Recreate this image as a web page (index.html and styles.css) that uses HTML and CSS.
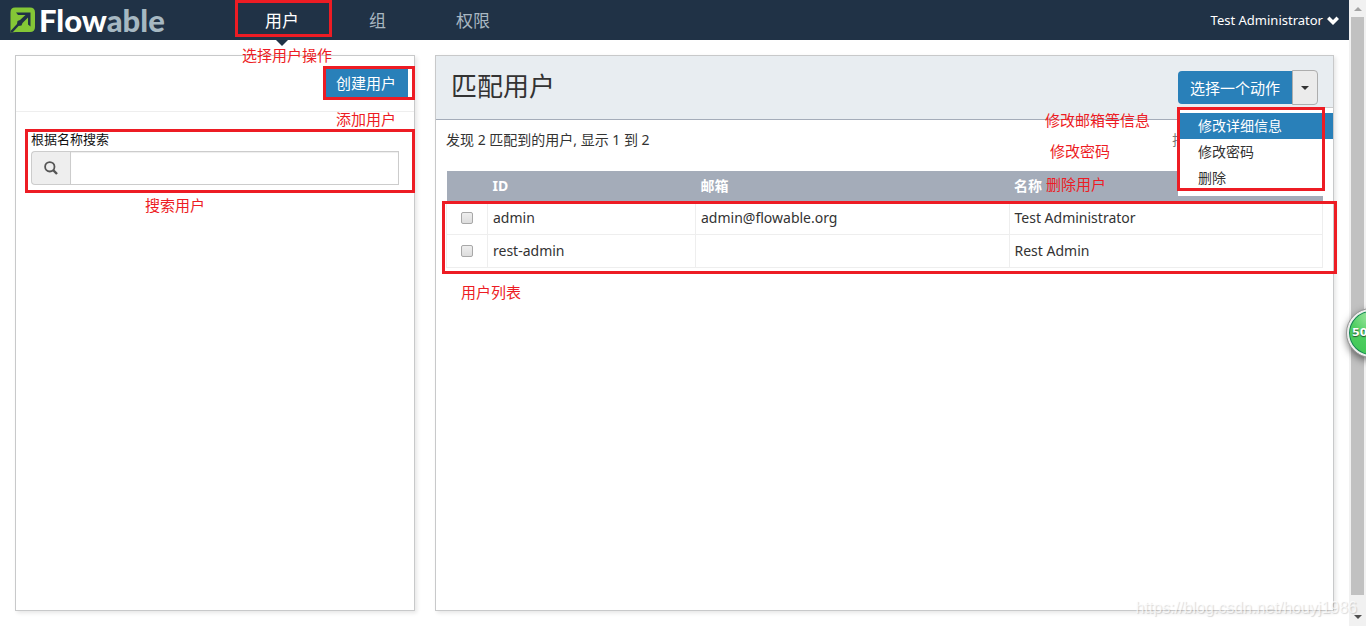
FILE: index.html
```html
<!DOCTYPE html>
<html lang="zh-CN">
<head>
<meta charset="utf-8">
<title>Flowable</title>
<link rel="stylesheet" href="styles.css">
</head>
<body>
<div class="page">
  <header class="topbar">
    <a class="brand" href="#" aria-label="Flowable">
      <svg class="brand-mark" viewBox="0 0 26 26" aria-hidden="true">
        <path d="M5 0.500H20Q25 0.500 25 5.500V20Q25 25 20 25H6L0.500 25.500V5.500Q0.500 0.500 5 0.500Z" fill="#84c736"/>
        <path d="M6 5.500H20.500V19.500L18 17.500V10.500L12.500 16L11.500 18.500L8.500 19L2.500 25.500H0.500V24L7 17L7.500 14L10 13L15.500 8H8Z" fill="#203246"/>
      </svg>
      <span class="brand-name">Flow<span class="brand-tail">able</span></span>
    </a>
    <nav class="nav">
      <a class="nav-link active" href="#">用户<span class="mark-box box-nav"></span></a>
      <a class="nav-link" href="#">组</a>
      <a class="nav-link" href="#">权限</a>
    </nav>
    <button class="account" type="button">Test Administrator
      <svg class="account-icon" viewBox="0 0 12 9" aria-hidden="true"><path d="M2.500 0.500L6 4L9.500 0.500L12 3L6 9L0 3Z" fill="#fff"/></svg>
    </button>
  </header>

  <main class="content">
    <section class="panel sidebar">
      <span class="note note-nav">选择用户操作</span>
      <div class="sidebar-head">
        <button class="btn-create" type="button">创建用户<span class="mark-box box-create"></span></button>
        <span class="note note-create">添加用户</span>
      </div>
      <form class="search">
        <label class="search-label" for="filter">根据名称搜索</label>
        <div class="search-group">
          <span class="search-addon">
            <svg class="search-icon" viewBox="0 0 14 14" aria-hidden="true"><circle cx="5.800" cy="5.800" r="4.700" fill="none" stroke="#555" stroke-width="1.800"/><path d="M9.200 9.200L13 13" stroke="#555" stroke-width="2.400"/></svg>
          </span>
          <input class="search-input" id="filter" type="text">
        </div>
        <span class="mark-box box-search"></span>
        <span class="note note-search">搜索用户</span>
      </form>
    </section>

    <section class="panel results">
      <div class="results-head">
        <h1 class="title">匹配用户</h1>
        <div class="actions">
          <button class="btn-action" type="button">选择一个动作</button>
          <button class="btn-caret" type="button" aria-label="展开"><span class="caret"></span></button>
          <ul class="menu">
            <li><a class="menu-item selected" href="#">修改详细信息</a></li>
            <li><a class="menu-item" href="#">修改密码</a></li>
            <li><a class="menu-item" href="#">删除</a></li>
          </ul>
          <span class="mark-box box-menu"></span>
          <span class="note note-details">修改邮箱等信息</span>
          <span class="note note-password">修改密码</span>
          <span class="note note-delete">删除用户</span>
        </div>
      </div>
      <div class="results-body">
        <div class="summary"><span>发现 2 匹配到的用户, 显示 1 到 2</span><span class="sort">排序</span></div>
        <div class="list">
          <table class="users">
            <colgroup><col class="col-check"><col class="col-id"><col><col></colgroup>
            <thead>
              <tr><th></th><th>ID</th><th>邮箱</th><th>名称</th></tr>
            </thead>
            <tbody>
              <tr><td class="check"><input class="tick" type="checkbox" aria-label="admin"></td><td>admin</td><td>admin@flowable.org</td><td>Test Administrator</td></tr>
              <tr><td class="check"><input class="tick" type="checkbox" aria-label="rest-admin"></td><td>rest-admin</td><td></td><td>Rest Admin</td></tr>
            </tbody>
          </table>
          <span class="mark-box box-list"></span>
          <span class="note note-list">用户列表</span>
        </div>
      </div>
    </section>
  </main>
</div>
<div class="scrollbar" aria-hidden="true">
  <span class="arrow-up"></span>
  <span class="thumb"></span>
  <span class="arrow-down"></span>
</div>
<div class="ball">50</div>
<div class="watermark">https://blog.csdn.net/houyj1986</div>
</body>
</html>
```

FILE: styles.css
```css
* { box-sizing: border-box; }

body {
  margin: 0;
  height: 100vh;
  display: flex;
  position: relative;
  overflow: hidden;
  background: #fff;
  color: #333;
  font: 14px/20px "Noto Sans", "Noto Sans CJK SC", sans-serif;
}

a { color: inherit; text-decoration: none; }
button { font: inherit; cursor: pointer; }

.page { flex: 1; min-width: 0; display: flex; flex-direction: column; }

/* Top bar */
.topbar {
  height: 40px;
  display: flex;
  align-items: center;
  padding: 0 10px;
  background: #203246;
}
.brand { width: 220px; display: flex; align-items: center; gap: 3px; }
.brand-mark { width: 26px; height: 26px; }
.brand-name { font: 900 31px/34px Lato, sans-serif; color: #fff; }
.brand-tail { color: #a6b8c2; }
.nav { flex: 1; display: flex; align-self: stretch; }
.nav-link {
  position: relative;
  padding: 0 35px;
  font-size: 17px;
  line-height: 42px;
  color: #a9b7c1;
}
.nav-link.active { color: #fff; }
.nav-link.active::after {
  content: "";
  position: absolute;
  top: 40px;
  left: 50%;
  margin-left: -6px;
  border: 6px solid transparent;
  border-top-color: #203246;
  border-bottom: 0;
}
.account {
  display: flex;
  align-items: center;
  gap: 4px;
  padding: 0;
  border: 0;
  background: none;
  color: #fff;
  font-size: 13px;
}
.account-icon { width: 12px; height: 9px; }

/* Panels */
.content { flex: 1; display: flex; gap: 20px; padding: 15px; }
.panel {
  position: relative;
  border: 1px solid #c8c9ca;
  box-shadow: 2px 2px 4px rgba(0, 0, 0, 0.1);
  background: #fff;
}
.sidebar { flex: 0 0 400px; }
.results { flex: 1; min-width: 0; }

.sidebar-head {
  position: relative;
  display: flex;
  justify-content: flex-end;
  padding: 10px 6px 11px;
  border-bottom: 1px solid #eee;
}
.btn-create {
  position: relative;
  height: 34px;
  padding: 0 12px;
  border: 0;
  background: #2980b9;
  color: #fff;
  font-size: 15px;
}
.search { position: relative; padding: 17px 15px 10px; }
.search-label { display: block; font-size: 13px; color: #111; }
.search-group { display: flex; height: 34px; margin-top: 2px; }
.search-addon {
  width: 39px;
  display: flex;
  align-items: center;
  justify-content: center;
  border: 1px solid #ccc;
  border-right: 0;
  border-radius: 4px 0 0 4px;
  background: #eee;
}
.search-icon { width: 14px; height: 14px; }
.search-input {
  flex: 1;
  min-width: 0;
  padding: 6px 12px;
  border: 1px solid #ccc;
  box-shadow: inset 0 1px 1px rgba(0, 0, 0, 0.07);
  font: inherit;
}

/* Results */
.results-head {
  display: flex;
  justify-content: space-between;
  align-items: flex-start;
  padding: 14px 15px;
  border-bottom: 1px solid #a4acb9;
  background: #e8edf1;
}
.title { margin: 0; font-size: 26px; font-weight: 400; line-height: 33px; }
.actions { position: relative; display: flex; align-items: center; }
.btn-action {
  height: 33px;
  padding: 0 12px;
  border: 0;
  border-radius: 4px 0 0 4px;
  background: #2980b9;
  color: #fff;
  font-size: 15px;
}
.btn-caret {
  width: 26px;
  height: 35px;
  display: flex;
  align-items: center;
  justify-content: center;
  padding: 0;
  border: 1px solid #adadad;
  border-radius: 0 4px 4px 0;
  background: #ebebeb;
}
.caret { border: 4px solid transparent; border-top-color: #333; border-bottom: 0; }
.menu {
  position: absolute;
  z-index: 2;
  top: 37px;
  left: 0;
  width: 155px;
  margin: 0;
  padding: 5px 0;
  border-top: 1px solid #ccc;
  background: #fff;
  list-style: none;
}
.menu-item { display: block; padding: 3px 20px; }
.menu-item.selected { background: #2980b9; color: #fff; }

.results-body { padding: 10px; }
.summary { display: flex; justify-content: space-between; margin-bottom: 21px; }
.sort { width: 151px; color: #777; }
.list { position: relative; }
.users { width: 100%; table-layout: fixed; border-collapse: collapse; }
.col-check { width: 41px; }
.col-id { width: 208px; }
.users th { height: 30px; padding: 0 5px; background: #a4acb9; color: #fff; text-align: left; }
.users td { height: 33px; padding: 0 5px; border: 1px solid #eee; }
.users .check { text-align: center; }
.tick {
  display: block;
  appearance: none;
  width: 12px;
  height: 12px;
  margin: 0 auto;
  border: 1px solid #a8a8a8;
  border-radius: 2px;
  background: linear-gradient(#eee, #ddd);
}

/* Annotations */
.mark-box { position: absolute; z-index: 3; border: 3px solid #ed1c24; pointer-events: none; }
.box-nav { inset: 0 2px 3px 5px; }
.box-create { inset: 0 -7px 0 -1px; }
.box-search { inset: 17px -1px 2px 9px; }
.box-menu { top: 37px; left: -1px; width: 148px; height: 84px; }
.box-list { inset: 30px -14px -6px -4px; }
.note { position: absolute; z-index: 3; color: #ed1c24; font-size: 15px; white-space: nowrap; }
.note-nav { top: -11px; right: 82px; }
.note-create { top: 53px; right: 18px; }
.note-search { top: 83px; left: 129px; }
.note-details { top: 40px; right: 168px; }
.note-password { top: 71px; right: 208px; }
.note-delete { top: 104px; right: 212px; }
.note-list { top: 111px; left: 15px; }

/* Window scrollbar */
.scrollbar {
  width: 17px;
  display: flex;
  flex-direction: column;
  align-items: center;
  padding: 7px 0;
  gap: 6px;
  background: #f1f1f1;
}
.arrow-up { border: 4px solid transparent; border-top: 0; border-bottom-color: #a3a3a3; }
.arrow-down { margin-top: 14px; border: 4px solid transparent; border-top-color: #505050; border-bottom: 0; }
.thumb { flex: 1; width: 13px; background: #c1c1c1; }

.ball {
  position: absolute;
  z-index: 4;
  top: 309px;
  right: -29px;
  width: 48px;
  height: 48px;
  padding-left: 3px;
  border: 2px solid #eee;
  border-radius: 50%;
  outline: 1px solid #999;
  background: radial-gradient(circle at 50% 10%, #a5e8a5, #4fce61 45%, #3fc653);
  box-shadow: inset 0 0 0 1px #16805a, 0 3px 8px rgba(0, 0, 0, 0.6);
  color: #fff;
  font: bold 11px/44px "DejaVu Sans", sans-serif;
  text-shadow: 0 1px 1px #205030;
}
.watermark {
  position: absolute;
  z-index: 4;
  right: 9px;
  bottom: 8px;
  color: rgba(255, 255, 255, 0.7);
  font: 16px/20px "Liberation Sans", sans-serif;
  text-shadow: 1px 1px 1px rgba(0, 0, 0, 0.15);
}
```
